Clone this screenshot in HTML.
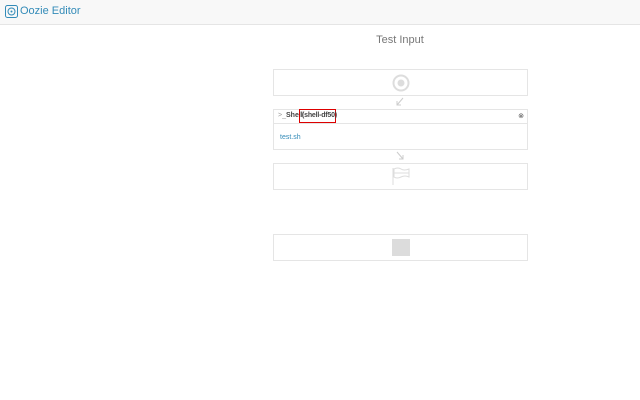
<!DOCTYPE html>
<html><head><style>
body{margin:0;width:640px;height:400px;background:#fff;font-family:"Liberation Sans",sans-serif;position:relative;overflow:hidden}
.hdr{position:absolute;left:0;top:0;width:640px;height:24px;background:#f8f8f8;border-bottom:1px solid #e5e5e5}
.hdr .t{position:absolute;left:20px;top:5px;font-size:11px;color:#338bb8}
.box{position:absolute;left:273px;width:253px;border:1px solid #e5e5e5;background:#fff}
.title{position:absolute;left:300px;width:200px;text-align:center;top:34px;font-size:11px;color:#777}
.s{position:absolute;top:2px;font-size:7px;white-space:nowrap}
</style></head><body>
<div class="hdr">
<svg style="position:absolute;left:5px;top:5px" width="13" height="13" viewBox="0 0 13 13"><rect x="0.5" y="0.5" width="12" height="12" rx="2" fill="none" stroke="#338bb8"/><circle cx="6.5" cy="6.5" r="3.5" fill="none" stroke="#338bb8"/><circle cx="6.5" cy="6.5" r="1" fill="#338bb8"/></svg>
<div class="t">Oozie Editor</div></div>
<div class="title">Test Input</div>
<div class="box" style="top:69px;height:25px">
<svg style="position:absolute;left:118px;top:4px" width="18" height="18" viewBox="0 0 18 18"><circle cx="9" cy="9" r="7.5" fill="none" stroke="#ddd" stroke-width="2"/><circle cx="9" cy="9" r="3.5" fill="#ddd"/></svg></div>
<svg style="position:absolute;left:395px;top:97px" width="10" height="10"><path d="M8 1 L2 8 M2 4 L2 8 L6 8" stroke="#ccc" fill="none"/></svg>
<div class="box" style="top:109px;height:39px">
<div style="position:absolute;left:0;top:0;width:253px;height:13px;border-bottom:1px solid #e5e5e5"></div>
<span class="s" style="left:4px;color:#999">&gt;_</span>
<span class="s" style="left:12px;color:#444;font-weight:bold">Shell</span>
<div style="position:absolute;left:25px;top:-1px;width:35px;height:12px;border:1.5px solid #d00"></div>
<span class="s" style="left:28px;color:#444;font-weight:bold;letter-spacing:-0.2px">(shell-df50)</span>
<div style="position:absolute;right:3px;top:2px;font-size:7px;color:#555">⊗</div>
<div style="position:absolute;left:6px;top:24px;font-size:7px;color:#338bb8">test.sh</div>
</div>
<svg style="position:absolute;left:395px;top:151px" width="10" height="10"><path d="M2 1 L8 8 M4 8 L8 8 L8 4" stroke="#ccc" fill="none"/></svg>
<div class="box" style="top:163px;height:25px">
<svg style="position:absolute;left:117px;top:3px" width="20" height="19" viewBox="0 0 20 19"><path d="M2 1 V18 M3 2 Q7 0 10 2 T18 2 V10 Q14 8 10 10 T3 10 Z M3 6 H18" stroke="#ddd" fill="none"/></svg></div>
<div class="box" style="top:234px;height:25px">
<div style="position:absolute;left:118px;top:4px;width:18px;height:17px;background:#dcdcdc"></div></div>
</body></html>
